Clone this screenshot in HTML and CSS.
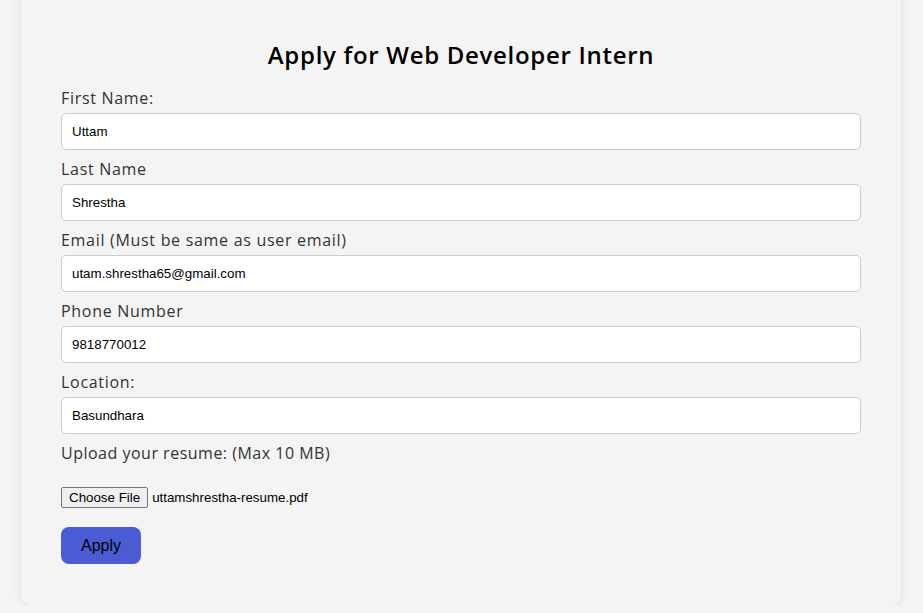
FILE: index.html
```html
<!DOCTYPE html>
<html lang="en">
<head>
<meta charset="utf-8">
<title>Apply for Web Developer Intern</title>
<link rel="stylesheet" href="styles.css">
</head>
<body>
<div class="card">
  <h2 class="title">Apply for Web Developer Intern</h2>
  <form class="form">
    <label class="label">First Name:</label>
    <input class="field" type="text" value="Uttam">
    <label class="label">Last Name</label>
    <input class="field" type="text" value="Shrestha">
    <label class="label">Email (Must be same as user email)</label>
    <input class="field" type="text" value="utam.shrestha65@gmail.com">
    <label class="label">Phone Number</label>
    <input class="field" type="text" value="9818770012">
    <label class="label">Location:</label>
    <input class="field" type="text" value="Basundhara">
    <label class="label label-upload">Upload your resume: (Max 10 MB)</label>
    <div class="file">
      <span class="file-btn">Choose File</span>
      <span class="file-name">uttamshrestha-resume.pdf</span>
    </div>
    <button class="apply" type="button">Apply</button>
  </form>
</div>
</body>
</html>
```
FILE: styles.css
```css
html, body {
  margin: 0;
  padding: 0;
  background: #f4f4f4;
}
.card {
  width: 800px;
  margin: -20px 0 0 21px;
  padding: 60px 40px 41px;
  background: #f4f4f4;
  border-radius: 10px;
  box-shadow: 0 0 10px rgba(0, 0, 0, 0.1);
}
.title {
  margin: 0 0 20px;
  text-align: center;
  font-family: "Open Sans", sans-serif;
  font-weight: 600;
  font-size: 24px;
  line-height: 29px;
  letter-spacing: 0.7px;
  color: #000;
}
.form {
  display: flex;
  flex-direction: column;
  align-items: flex-start;
}
.label {
  display: block;
  font-family: "Open Sans", sans-serif;
  font-size: 16px;
  line-height: 19px;
  letter-spacing: 0.7px;
  color: #333;
  margin-bottom: 5px;
}
.label-upload {
  letter-spacing: 0.5px;
}
.field {
  box-sizing: border-box;
  width: 800px;
  height: 37px;
  margin: 0 0 10px;
  padding: 0 10px;
  border: 1px solid #ccc;
  border-radius: 5px;
  background: #fff;
  font-family: "Liberation Sans", Arial, sans-serif;
  font-size: 13.33px;
  color: #000;
  outline: none;
}
.file {
  display: flex;
  align-items: center;
  gap: 4px;
  margin: 19px 0 19px;
  height: 21px;
  font-family: "Liberation Sans", Arial, sans-serif;
  font-size: 13.33px;
  color: #000;
}
.file-btn {
  box-sizing: border-box;
  height: 21px;
  padding: 0 7px;
  display: flex;
  align-items: center;
  border: 1px solid #767676;
  border-radius: 2px;
  background: #efefef;
}
.apply {
  width: 80px;
  height: 37px;
  border: none;
  border-radius: 8px;
  background: #4a5bd4;
  color: #000;
  font-family: "Liberation Sans", Arial, sans-serif;
  font-size: 16px;
  padding: 0;
}
```
